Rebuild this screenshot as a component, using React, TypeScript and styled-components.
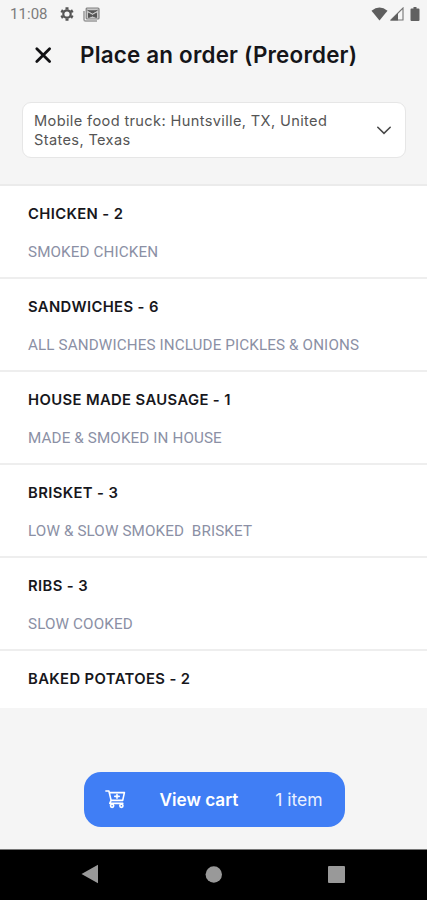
import React from "react";
import styled, { createGlobalStyle } from "styled-components";

const GlobalStyle = createGlobalStyle`
  *, *::before, *::after { box-sizing: border-box; }
  body { margin: 0; background: #f5f5f5; font-family: Inter, "Liberation Sans", sans-serif; }
`;

const Screen = styled.main`
  display: flex;
  flex-direction: column;
  width: 427px;
  height: 900px;
  overflow: hidden;
  background: #f5f5f5;
`;

const StatusBar = styled.div`
  display: flex;
  align-items: center;
  height: 28px;
  padding: 0 5px 0 10px;
`;

const Clock = styled.span`
  width: 50px;
  font: 400 15px/28px Roboto, sans-serif;
  letter-spacing: 0.05px;
  color: #7c7c7c;
`;

const StatusIcons = styled.div`
  display: flex;
  align-items: center;
  gap: 9px;
`;

const SystemIcons = styled(StatusIcons)`
  margin-left: auto;
  gap: 2px;
`;

const Header = styled.header`
  display: flex;
  align-items: center;
  height: 54px;
  padding-left: 34px;
`;

const CloseButton = styled.button`
  display: flex;
  width: 46px;
  padding: 0;
  border: 0;
  background: none;
`;

const Title = styled.h1`
  margin: 0;
  font-size: 22.4px;
  font-weight: 560;
  line-height: 28px;
  letter-spacing: 0.2px;
  color: #151519;
  white-space: nowrap;
`;

const LocationArea = styled.div`
  height: 104px;
  padding: 20px 21px 0 22px;
  border-bottom: 2px solid #ebebeb;
`;

const LocationSelect = styled.button`
  display: flex;
  align-items: center;
  justify-content: space-between;
  width: 100%;
  height: 56px;
  padding: 0 13px 0 11px;
  border: 1px solid #e6e6e6;
  border-radius: 9px;
  background: #fff;
  text-align: left;
`;

const LocationText = styled.span`
  width: 310px;
  padding-top: 2px;
  font: 400 14.6px/19px Inter, sans-serif;
  letter-spacing: 0.36px;
  color: #555;
`;

const Menu = styled.section`
  height: 522px;
  overflow: hidden;
  background: #fff;
`;

const MenuRow = styled.article`
  height: 93px;
  padding: 18px 28px 0;
  border-bottom: 2px solid #eeeeee;
  white-space: pre;
`;

const Name = styled.h2`
  margin: 0;
  font-size: 14.8px;
  font-weight: 600;
  line-height: 20px;
  letter-spacing: 0.38px;
  color: #17171c;
`;

const Description = styled.p`
  margin: 18px 0 0;
  font: 400 15.2px/20px Roboto, sans-serif;
  letter-spacing: 0.13px;
  color: #8b90a5;
`;

const Footer = styled.footer`
  display: flex;
  justify-content: center;
  flex: 1;
  padding: 64px 0 0 1px;
`;

const CartButton = styled.button`
  display: flex;
  align-items: center;
  width: 261px;
  height: 55px;
  padding: 0 22px 0 21px;
  border: 0;
  border-radius: 17px;
  background: #407ef5;
  color: #fff;
  font: 600 17.2px/24px Inter, sans-serif;
`;

const CartLabel = styled.span`
  margin-left: 34px;
  white-space: nowrap;
`;

const CartCount = styled.span`
  margin-left: auto;
  font-size: 17.5px;
  font-weight: 400;
  color: #eaf1ff;
  white-space: nowrap;
`;

const NavBar = styled.nav`
  display: flex;
  align-items: center;
  justify-content: space-between;
  height: 51px;
  padding: 0 82px 2px 81px;
  border-top: 1px solid #777;
  background: #000;
`;

const items = [
  { name: "CHICKEN - 2", description: "SMOKED CHICKEN" },
  { name: "SANDWICHES - 6", description: "ALL SANDWICHES INCLUDE PICKLES & ONIONS" },
  { name: "HOUSE MADE SAUSAGE - 1", description: "MADE & SMOKED IN HOUSE" },
  { name: "BRISKET - 3", description: "LOW & SLOW SMOKED  BRISKET" },
  { name: "RIBS - 3", description: "SLOW COOKED" },
  { name: "BAKED POTATOES - 2", description: "" },
];

const GearIcon = () => (
  <svg width="14" height="14" viewBox="0 0 14 14" fill="none" stroke="#555">
    <circle cx="7" cy="7" r="3.7" strokeWidth="2.2" />
    <path d="M7 .3v2.2M7 11.5v2.2M1.2 3.65l1.9 1.1M10.9 9.25l1.9 1.1M1.2 10.35l1.9-1.1M10.9 4.75l1.9-1.1" strokeWidth="3" />
  </svg>
);

const NewsIcon = () => (
  <svg width="17" height="15" viewBox="0 0 17 15" fill="none">
    <path d="M1 4v8.5q0 1.5 1.5 1.5H14" stroke="#999" strokeWidth="1.5" />
    <rect x="3.2" y="1" width="12.8" height="11" rx="1" fill="#c8c8c8" stroke="#808080" strokeWidth="1.2" />
    <path d="M4.5 3.2 9.5 6l5-2.8M5.5 10.5V6.2l4 2.2 4-2.2v4.3l-4-1.6z" fill="#555" stroke="#555" strokeWidth="1" />
  </svg>
);

const WifiIcon = () => (
  <svg width="17" height="14" viewBox="0 0 17 14">
    <path d="M.5 3.7Q8.5-2.7 16.5 3.7L8.5 13.5Z" fill="#5e5e5e" />
  </svg>
);

const SignalIcon = () => (
  <svg width="14" height="14" viewBox="0 0 14 14">
    <path d="M1 13 13 1v12Z" fill="none" stroke="#747474" strokeWidth="1.1" />
    <path d="M.5 13.5 8 6v7.5Z" fill="#5e5e5e" />
  </svg>
);

const BatteryIcon = () => (
  <svg width="16" height="14" viewBox="0 0 16 14">
    <path d="M8 1.5h2V0h3v1.5h2q1 0 1 1V13q0 1-1 1H8q-1 0-1-1V2.5q0-1 1-1Z" fill="#606060" transform="translate(-2.5 0)" />
  </svg>
);

const CartIcon = () => (
  <svg width="21" height="20" viewBox="0 0 21 20" fill="none" stroke="#fff" strokeWidth="1.6" strokeLinecap="round" strokeLinejoin="round">
    <path d="M.9 1h3l2.2 9.4h11.6L19.4 2.6H4.3M6.1 10.4l-1.3 3h13M9.8 6.4h4.4M12 4.5v3.8" />
    <circle cx="7.1" cy="15.8" r="1.6" />
    <circle cx="16.4" cy="15.8" r="1.6" />
  </svg>
);

export default function App() {
  return (
    <>
      <GlobalStyle />
      <Screen>
        <StatusBar>
          <Clock>11:08</Clock>
          <StatusIcons><GearIcon /><NewsIcon /></StatusIcons>
          <SystemIcons><WifiIcon /><SignalIcon /><BatteryIcon /></SystemIcons>
        </StatusBar>
        <Header>
          <CloseButton aria-label="Close">
            <svg width="18" height="18" viewBox="0 0 18 18" stroke="#111114" strokeWidth="2.8" strokeLinecap="round">
              <path d="m2.8 2.8 12.8 12.8m0-12.8-12.8 12.8" />
            </svg>
          </CloseButton>
          <Title>Place an order (Preorder)</Title>
        </Header>
        <LocationArea>
          <LocationSelect>
            <LocationText>Mobile food truck: Huntsville, TX, United States, Texas</LocationText>
            <svg width="16" height="10" viewBox="0 0 16 10" fill="none" stroke="#484848" strokeWidth="1.6" strokeLinecap="round">
              <path d="m1.8 2.3 6.2 6 6.2-6" />
            </svg>
          </LocationSelect>
        </LocationArea>
        <Menu>
          {items.map((item) => (
            <MenuRow key={item.name}>
              <Name>{item.name}</Name>
              <Description>{item.description}</Description>
            </MenuRow>
          ))}
        </Menu>
        <Footer>
          <CartButton>
            <CartIcon />
            <CartLabel>View cart</CartLabel>
            <CartCount>1 item</CartCount>
          </CartButton>
        </Footer>
        <NavBar>
          <svg width="17" height="20" viewBox="0 0 17 20"><path d="M.5 10 17 .8v18.4Z" fill="#999" /></svg>
          <svg width="17" height="17" viewBox="0 0 17 17"><circle cx="8.8" cy="8.5" r="8.2" fill="#999" /></svg>
          <svg width="17" height="17" viewBox="0 0 17 17"><rect width="17" height="17" rx="1" fill="#999" /></svg>
        </NavBar>
      </Screen>
    </>
  );
}
